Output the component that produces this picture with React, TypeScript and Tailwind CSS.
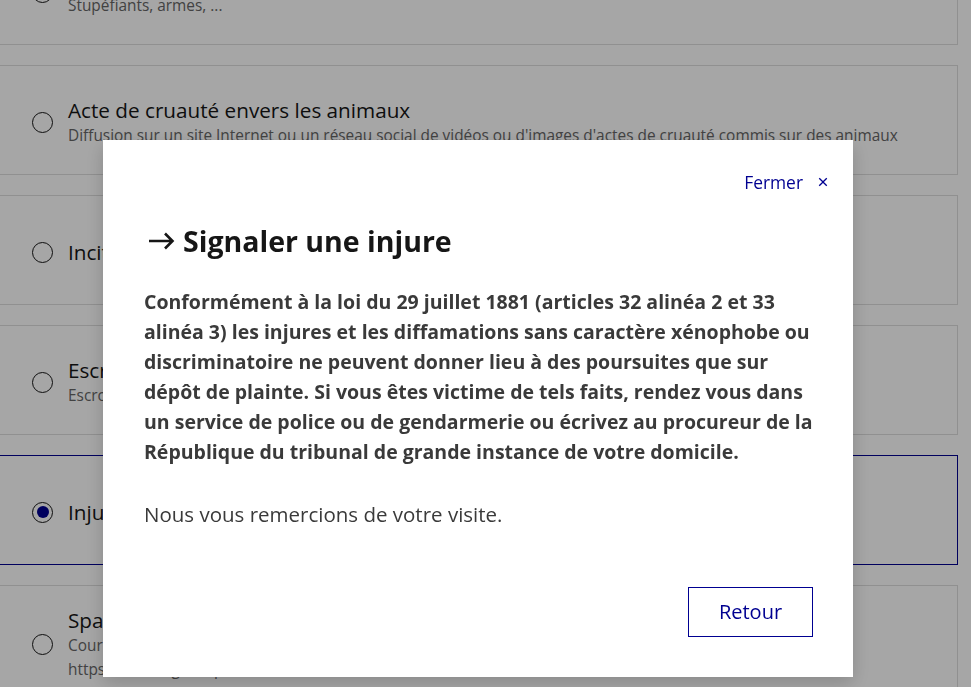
import React from 'react'
import { RiCloseLine } from 'react-icons/ri'

type Option = { id: string; title: string; description?: string[] }

const options: Option[] = [
  { id: 'trafic', title: 'Trafic illicite', description: ['Stupéfiants, armes, ...'] },
  {
    id: 'animaux',
    title: 'Acte de cruauté envers les animaux',
    description: ["Diffusion sur un site Internet ou un réseau social de vidéos ou d'images d'actes de cruauté commis sur des animaux"],
  },
  { id: 'haine', title: 'Incitation à la haine raciale ou discrimination' },
  { id: 'escroquerie', title: 'Escroquerie', description: ['Escroquerie en ligne, hameçonnage, faux sites de vente, ...'] },
  { id: 'injure', title: 'Injure ou diffamation' },
  {
    id: 'spam',
    title: 'Spam',
    description: [
      'Courrier électronique non sollicité : signalez-le sur la plateforme dédiée',
      'https://www.signal-spam.fr',
    ],
  },
]

function OptionCard({ option, selected }: { option: Option; selected: boolean }) {
  return (
    <div
      className={`flex items-center gap-[15px] border border-l-0 bg-white pl-[32px] pr-6 ${
        option.id === 'spam' ? 'pb-[26px] pt-5' : 'h-[110px] pt-[4px]'
      } ${selected ? 'border-[#000091]' : 'border-[#dddddd]'}`}
    >
      <span className="flex h-[21px] w-[21px] shrink-0 items-center justify-center rounded-full border border-[#161616]">
        {selected && <span className="h-[12px] w-[12px] rounded-full bg-[#000091]" />}
      </span>
      <div className="flex flex-col">
        <span className="text-[20.7px] leading-[28px] text-[#161616]">{option.title}</span>
        {option.description?.map((d) => (
          <span key={d} className="whitespace-nowrap text-[15.4px] leading-[24px] text-[#666666]">
            {d}
          </span>
        ))}
      </div>
    </div>
  )
}

export default function App() {
  return (
    <div className="relative h-[687px] overflow-hidden bg-white font-['Open_Sans',sans-serif]">
      <div className="mr-[13px] -mt-[65px] flex flex-col gap-5">
        {options.map((o) => (
          <OptionCard key={o.id} option={o} selected={o.id === 'injure'} />
        ))}
      </div>

      <div className="fixed inset-0 flex justify-center bg-black/35 pr-[15px] pt-[140px]">
        <div className="flex h-[537px] w-[750px] flex-col bg-white px-10 pb-10 pt-[30px] shadow-[0_6px_18px_rgba(0,0,0,0.18)]">
          <div className="flex justify-end">
            <button className="-mr-[18px] flex items-center gap-[12px] text-[17.4px] leading-[24px] text-[#000091]">
              Fermer
              <RiCloseLine className="h-4 w-4" />
            </button>
          </div>

          <h1 className="mt-[29px] flex items-center gap-[6px] text-[28.5px] font-bold leading-[36px] text-[#161616]">
            <svg width="30" height="18" viewBox="0 0 30 18" className="ml-[4px] shrink-0" fill="none">
              <path d="M2 9h24M18 1.5l7.5 7.5-7.5 7.5" stroke="#161616" strokeWidth="2.6" />
            </svg>
            Signaler une injure
          </h1>

          <p className="mt-[28px] pl-[1px] text-[19.5px] font-bold leading-[30px] text-[#3a3a3a]">
            Conformément à la loi du 29 juillet 1881 (articles 32 alinéa 2 et 33 alinéa 3) les injures et les
            diffamations sans caractère xénophobe ou discriminatoire ne peuvent donner lieu à des poursuites que sur
            dépôt de plainte. Si vous êtes victime de tels faits, rendez vous dans un service de police ou de
            gendarmerie ou écrivez au procureur de la République du tribunal de grande instance de votre domicile.
          </p>

          <p className="mt-[32px] pl-[1px] text-[20.5px] leading-[30px] text-[#3a3a3a]">
            Nous vous remercions de votre visite.
          </p>

          <div className="mt-auto flex justify-end">
            <button className="h-[50px] w-[125px] border border-[#000091] text-[20px] text-[#000091]">Retour</button>
          </div>
        </div>
      </div>
    </div>
  )
}
